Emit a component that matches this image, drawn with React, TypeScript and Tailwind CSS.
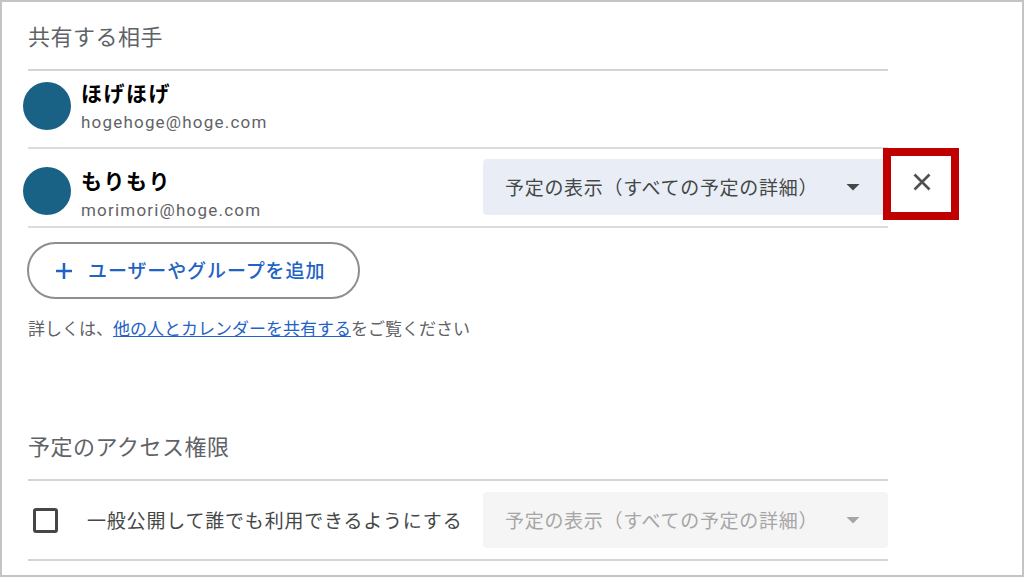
import React from 'react';

const jp = "font-['Noto_Sans_CJK_JP','Noto_Sans',sans-serif]";

const Caret = ({ className }: { className: string }) => (
  <svg width="14" height="7" viewBox="0 0 14 7" className={className}>
    <path d="M0.5 0h13L7 6.5z" fill="currentColor" />
  </svg>
);

type PersonProps = {
  name: string;
  email: string;
  rowClass: string;
  avatarClass: string;
  textClass: string;
  children?: React.ReactNode;
};

const Person = ({ name, email, rowClass, avatarClass, textClass, children }: PersonProps) => (
  <div className={`flex items-start border-b-2 border-[#dcdcdc] ${rowClass}`}>
    <div className={`w-12 h-12 rounded-full bg-[#1a6285] -ml-[5px] shrink-0 ${avatarClass}`} />
    <div className={`ml-[10px] flex flex-col ${textClass}`}>
      <div className="text-[21px] leading-[30px] font-bold text-black tracking-[1.5px]">{name}</div>
      <div className="mt-[2px] text-[17px] leading-[26px] text-[#5f6368] font-['Roboto',sans-serif] tracking-[1.2px]">{email}</div>
    </div>
    {children}
  </div>
);

const Select = ({ disabled }: { disabled?: boolean }) => (
  <div
    className={
      disabled
        ? 'ml-auto w-[405px] h-[56px] rounded-[4px] bg-[#f5f5f5] text-[#a6a6a6] flex items-center pl-[22px] pr-[28px] text-[19px] tracking-[0.7px]'
        : 'ml-auto mt-[10px] w-[405px] h-[56px] rounded-[4px] bg-[#e9eef6] text-[#444746] flex items-center pl-[22px] pr-[28px] text-[19px] tracking-[0.7px]'
    }
  >
    <span>予定の表示（すべての予定の詳細）</span>
    <Caret className="ml-auto" />
  </div>
);

export default function App() {
  return (
    <div className={`w-[1024px] h-[577px] bg-white border-2 border-[#c4c4c4] overflow-hidden pl-[26px] ${jp}`}>
      <div className="w-[860px]">
        {/* 共有する相手 */}
        <div className="h-[67px] pt-[15px] text-[22px] leading-[36px] tracking-[0.5px] text-[#5f6368]">共有する相手</div>
        <div className="border-t-2 border-[#d4d4d4]">
          <Person
            name="ほげほげ"
            email="hogehoge@hoge.com"
            rowClass="h-[78px]"
            avatarClass="mt-[11px]"
            textClass="mt-[6px]"
          />
          <div className="relative">
            <Person
              name="もりもり"
              email="morimori@hoge.com"
              rowClass="h-[79px]"
              avatarClass="mt-[18px]"
              textClass="mt-[16px]"
            >
              <Select />
            </Person>
            <div className="absolute left-[855px] -top-[1px] w-[76px] h-[72px] border-[8px] border-[#c00000] bg-white flex items-center justify-center">
              <svg width="18" height="18" viewBox="0 0 18 18" className="text-[#505050] -mt-[5px] ml-[2px]">
                <path d="M1.5 1.5l15 15M16.5 1.5l-15 15" stroke="currentColor" strokeWidth="2.7" fill="none" />
              </svg>
            </div>
          </div>
        </div>

        <button className="mt-[14px] -ml-[1px] w-[333px] h-[57px] rounded-full border-2 border-[#8e8e8e] bg-white flex items-center pl-[25px] text-[#1f63c4] text-[19px] tracking-[0.9px] font-medium">
          <svg width="20" height="20" viewBox="0 0 20 20" className="shrink-0">
            <path d="M10 2v16M2 10h16" stroke="currentColor" strokeWidth="2.5" fill="none" />
          </svg>
          <span className="ml-[14px]">ユーザーやグループを追加</span>
        </button>

        <p className="mt-[17px] text-[17px] leading-[24px] text-[#5f6368]">
          詳しくは、<span className="text-[#1f63c4] underline">他の人とカレンダーを共有する</span>をご覧ください
        </p>

        {/* 予定のアクセス権限 */}
        <div className="mt-[87px] h-[52px] text-[22px] leading-[36px] tracking-[0.5px] text-[#5f6368]">予定のアクセス権限</div>
        <div className="h-[82px] border-y-2 border-[#d4d4d4] flex items-center">
          <div className="ml-[5px] w-[25px] h-[25px] rounded-[3px] border-[3px] border-[#444746] shrink-0" />
          <span className="ml-[29px] text-[19px] text-[#444746] tracking-[0.8px]">一般公開して誰でも利用できるようにする</span>
          <Select disabled />
        </div>
      </div>
    </div>
  );
}
